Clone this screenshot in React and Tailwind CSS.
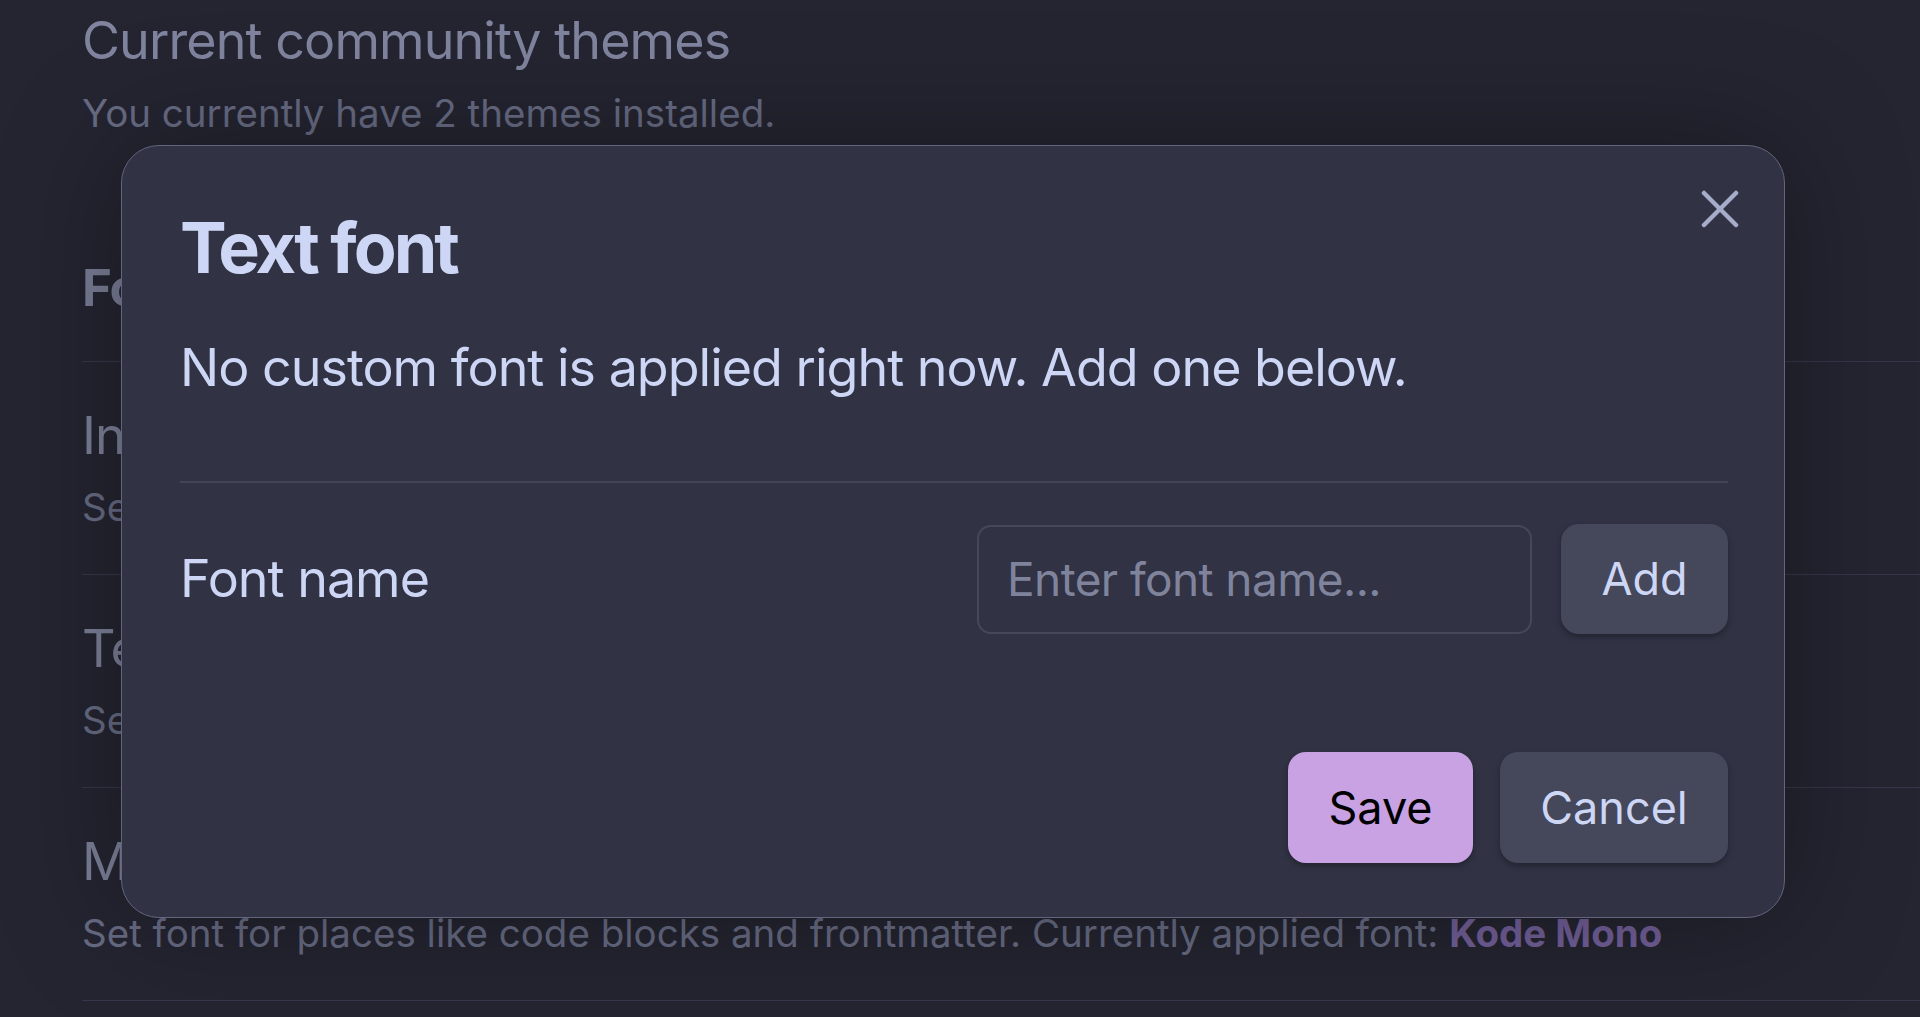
import React from "react";

function BgItem({ name, desc }) {
  return (
    <div className="border-b border-[#35374a] pt-[43px] pb-[45px]">
      <div className="text-[52px] leading-[62px] tracking-[-0.9px] text-[#7c8098] whitespace-nowrap">{name}</div>
      <div className="mt-[18px] text-[38.5px] leading-[44px] text-[#686c84] whitespace-nowrap">{desc}</div>
    </div>
  );
}

export default function App() {
  return (
    <div className="relative w-[1920px] h-[1017px] overflow-hidden bg-[#252532] font-['Inter','Noto_Sans',sans-serif]">
      {/* background settings page */}
      <div className="pl-[82px] pt-[10px]">
        <div className="text-[52px] leading-[62px] tracking-[-0.9px] text-[#80849e] whitespace-nowrap">
          Current community themes
        </div>
        <div className="mt-[19px] text-[38.5px] leading-[44px] text-[#686c84] whitespace-nowrap">
          You currently have 2 themes installed.
        </div>
        <div className="mt-[122px] border-b border-[#35374a] pb-[42px] text-[51px] leading-[62px] font-bold tracking-[-1px] text-[#7a7e96]">
          Font
        </div>
        <BgItem name="Interface font" desc="Set base font for all of Obsidian." />
        <BgItem name="Text font" desc="Set font for editing and reading views." />
        <BgItem
          name="Monospace font"
          desc={
            <>
              Set font for places like code blocks and frontmatter. Currently applied font:{" "}
              <span className="font-bold text-[#73609a]">Kode Mono</span>
            </>
          }
        />
      </div>

      {/* modal */}
      <div className="absolute left-[121px] top-[145px] w-[1664px] h-[773px] rounded-[38px] border border-[#62657d] bg-[#313244] pt-[60px] pl-[58px] pr-[56px] flex flex-col shadow-[0_0_120px_rgba(0,0,0,0.35)]">
        <button className="absolute right-[45px] top-[44px] w-[38px] h-[38px] text-[#a6adc8]">
          <svg viewBox="0 0 38 38" width="38" height="38" fill="none" stroke="currentColor" strokeWidth="4.5" strokeLinecap="round">
            <line x1="3" y1="3" x2="35" y2="35" />
            <line x1="35" y1="3" x2="3" y2="35" />
          </svg>
        </button>

        <div className="text-[70px] leading-[84px] font-bold tracking-[-3px] text-[#cdd6f4] whitespace-nowrap">Text font</div>
        <div className="mt-[47px] text-[52px] leading-[62px] tracking-[-1px] text-[#cdd6f4] whitespace-nowrap">
          No custom font is applied right now. Add one below.
        </div>
        <div className="mt-[82px] h-[2px] bg-[#434558]" />

        <div className="mt-[41px] flex items-center">
          <div className="flex-1 text-[52px] leading-[62px] tracking-[-1px] text-[#cdd6f4] whitespace-nowrap">Font name</div>
          <input
            type="text"
            placeholder="Enter font name..."
            className="w-[555px] h-[109px] rounded-[14px] border-2 border-[#45475a] bg-transparent pl-[28px] text-[46px] tracking-[-0.6px] text-[#cdd6f4] placeholder:text-[#7f849c] outline-none"
          />
          <button className="ml-[29px] w-[167px] h-[110px] rounded-[18px] bg-[#45475a] text-[45px] text-[#cdd6f4] shadow-[0_3px_6px_rgba(0,0,0,0.3)]">
            Add
          </button>
        </div>

        <div className="mt-[118px] flex justify-end gap-[27px]">
          <button className="w-[185px] h-[111px] rounded-[18px] bg-[#c8a2e2] text-[45px] text-black shadow-[0_3px_6px_rgba(0,0,0,0.3)]">
            Save
          </button>
          <button className="w-[228px] h-[111px] rounded-[18px] bg-[#45475a] text-[45px] text-[#cdd6f4] shadow-[0_3px_6px_rgba(0,0,0,0.3)]">
            Cancel
          </button>
        </div>
      </div>
    </div>
  );
}
